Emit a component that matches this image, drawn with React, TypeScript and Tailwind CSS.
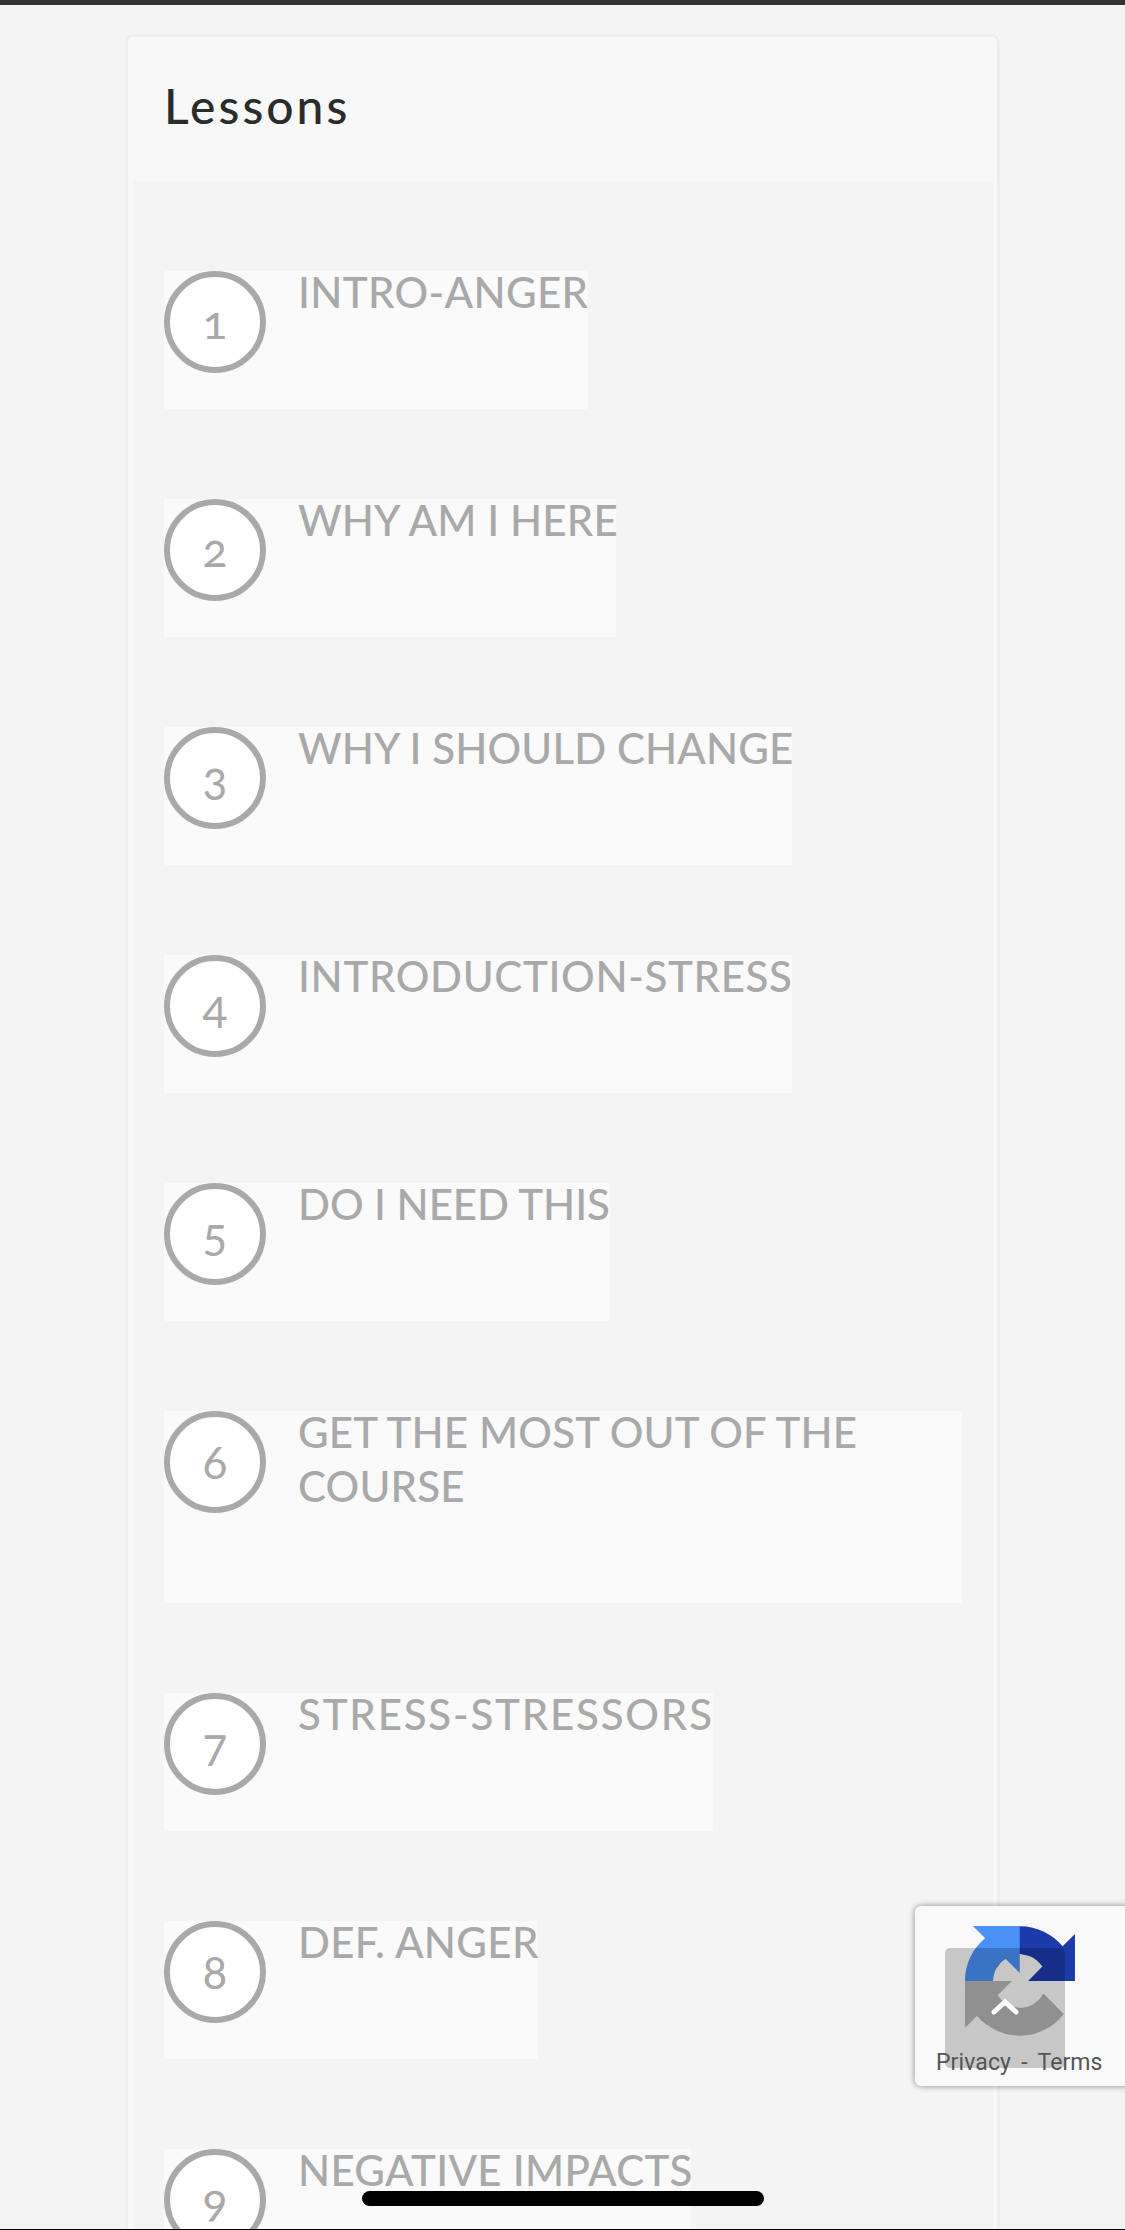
const lessons = [
  { n: 1, title: "INTRO-ANGER", width: "w-[424px]", tracking: "tracking-[0.35px]" },
  { n: 2, title: "WHY AM I HERE", width: "w-[452px]", tracking: "tracking-[0.15px]" },
  { n: 3, title: "WHY I SHOULD CHANGE", width: "w-[628px]", tracking: "tracking-[0.1px]" },
  { n: 4, title: "INTRODUCTION-STRESS", width: "w-[628px]", tracking: "tracking-[0.65px]" },
  { n: 5, title: "DO I NEED THIS", width: "w-[446px]", tracking: "tracking-[-0.05px]" },
  { n: 6, title: "GET THE MOST OUT OF THE\nCOURSE", width: "w-[798px]", tracking: "tracking-[0.15px]" },
  { n: 7, title: "STRESS-STRESSORS", width: "w-[549px]", tracking: "tracking-[1.8px]" },
  { n: 8, title: "DEF. ANGER", width: "w-[374px]", tracking: "tracking-[0.35px]" },
  { n: 9, title: "NEGATIVE IMPACTS", width: "w-[527px]", tracking: "tracking-[0.3px]" },
];

function RecaptchaLogo() {
  return (
    <svg viewBox="0 0 64 64" className="w-[110px] h-[112px] blur-[0.6px]">
      <path
        d="M64 31.955l-.033-1.37V4.687l-7.16 7.16C50.948 4.674 42.033.093 32.05.093c-10.4 0-19.622 4.958-25.458 12.636l11.736 11.86a15.55 15.55 0 0 1 4.754-5.334c2.05-1.6 4.952-2.906 8.968-2.906.485 0 .86.057 1.135.163 4.976.393 9.288 3.14 11.828 7.124l-8.307 8.307 26.295.013"
        fill="#1c3aa9"
      />
      <path
        d="M31.862.001l-1.37.033H4.594l7.16 7.16C4.58 13.053 0 21.968 0 31.95c0 10.4 4.958 19.622 12.636 25.458l11.86-11.736a15.55 15.55 0 0 1-5.334-4.754c-1.6-2.05-2.906-4.952-2.906-8.968 0-.485.057-.86.163-1.135.393-4.976 3.14-9.288 7.124-11.828l8.307 8.307L31.862.001"
        fill="#4a90f5"
      />
      <path
        d="M.001 31.95l.033 1.37v25.898l7.16-7.16c5.86 7.173 14.775 11.754 24.757 11.754 10.4 0 19.622-4.958 25.458-12.636l-11.736-11.86a15.55 15.55 0 0 1-4.754 5.334c-2.05 1.6-4.952 2.906-8.968 2.906-.485 0-.86-.057-1.135-.163-4.976-.393-9.288-3.14-11.828-7.124l8.307-8.307L.001 31.95"
        fill="#b4b4b4"
      />
    </svg>
  );
}

function LessonRow({ n, title, width, tracking }: { n: number; title: string; width: string; tracking: string }) {
  return (
    <div className={`flex items-start gap-[32px] bg-[#fafafa] ${width}`}>
      <div className="flex h-[102px] w-[102px] shrink-0 items-center justify-center rounded-full border-[6px] border-[#a9a9a9] bg-white pb-[2px] text-[46px] text-[#a9a9a9] [font-feature-settings:'onum']">
        {n}
      </div>
      <div className={`-mt-[6px] pb-[90px] text-[42px] leading-[54px] font-medium whitespace-pre text-[#a9a9a9] ${tracking}`}>
        {title}
      </div>
    </div>
  );
}

export default function App() {
  return (
    <div className="relative h-[2230px] w-[1125px] overflow-hidden bg-[#f4f4f4] font-['Lato',sans-serif]">
      <div className="h-[5px] bg-[#2f3336]" />

      <div className="ml-[125px] mt-[29px] w-[875px] rounded-[8px] border-[3px] border-[#eeeeee] bg-[#f8f8f8]">
        <div className="flex h-[144px] items-center pb-[6px] pl-[36px] text-[48px] font-medium tracking-[3px] text-[#2b2b2b]">
          Lessons
        </div>
        <div className="ml-[6px] mr-[4px] flex flex-col gap-[90px] bg-[#f4f4f4] pl-[30px] pt-[90px]">
          {lessons.map((l) => (
            <LessonRow key={l.n} {...l} />
          ))}
        </div>
      </div>

      {/* recaptcha badge */}
      <div className="absolute left-[915px] top-[1906px] h-[180px] w-[220px] rounded-[6px] bg-[#f9f9f9] shadow-[0_0_6px_rgba(0,0,0,0.45)]">
        <div className="ml-[50px] mt-[19px]">
          <RecaptchaLogo />
        </div>
      </div>

      {/* back to top */}
      <div className="absolute left-[945px] top-[1948px] flex h-[120px] w-[120px] justify-center rounded-[5px] bg-[rgba(0,0,0,0.2)] pt-[50px]">
        <svg viewBox="0 0 28 17" className="h-[17px] w-[28px]" fill="none" stroke="white" strokeWidth="5" strokeLinecap="round">
          <path d="M3 14 L14 4 L25 14" />
        </svg>
      </div>

      <div className="absolute left-[936px] top-[2049px] font-['Roboto',sans-serif] text-[23px] leading-[28px] tracking-[0.1px] [word-spacing:-0.7px] whitespace-pre text-[#555555]">
        Privacy  -  Terms
      </div>

      <div className="absolute left-[362px] top-[2191px] h-[15px] w-[402px] rounded-full bg-black" />
      <div className="absolute bottom-0 left-0 h-[1px] w-full bg-black" />
    </div>
  );
}
